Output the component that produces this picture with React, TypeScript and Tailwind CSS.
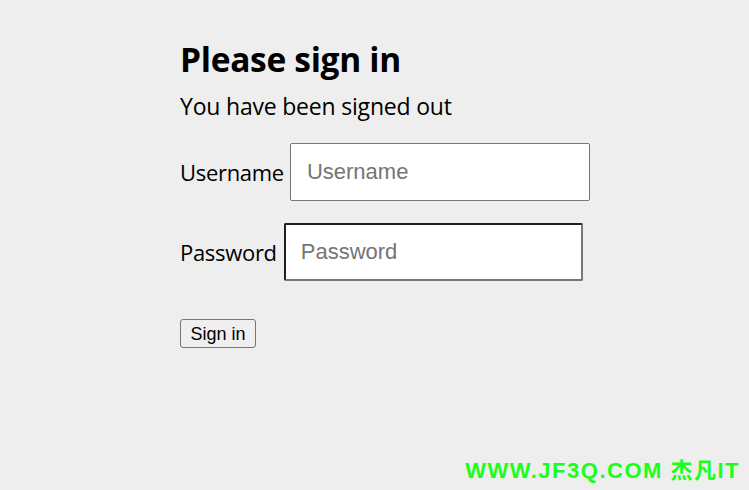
import React from "react";

const App: React.FC = () => {
  return (
    <div className="relative h-[490px] w-full overflow-hidden bg-[#eeeeee] font-['Open_Sans',sans-serif] text-black">
      <div className="pl-[180px] pt-[35px]">
        {/* Heading */}
        <h2 className="text-[33.5px] font-bold leading-[48px] tracking-[-0.3px]">Please sign in</h2>
        <p className="mt-[7px] text-[23px] leading-[32px] tracking-[-0.2px]">You have been signed out</p>

        {/* Fields */}
        <div className="mt-[21px] flex items-center">
          <label className="text-[22px] tracking-[-0.3px]">Username</label>
          <input
            type="text"
            placeholder="Username"
            className="ml-[6px] h-[58px] w-[300px] rounded-[2px] border border-[#767676] bg-white px-[16px] font-['Liberation_Sans',sans-serif] text-[22px] placeholder:text-[#757575] focus:outline-none"
          />
        </div>
        <div className="mt-[22px] flex items-center">
          <label className="text-[22px] tracking-[-0.3px]">Password</label>
          <input
            type="password"
            placeholder="Password"
            className="ml-[7px] h-[58px] w-[299px] rounded-[2px] border-2 border-[#1f1f1f] border-r-[#767676] border-b-[#767676] bg-white px-[15px] font-['Liberation_Sans',sans-serif] text-[22px] placeholder:text-[#757575] focus:outline-none"
          />
        </div>

        {/* Submit */}
        <button className="mt-[38px] h-[29px] w-[76px] rounded-[3px] border border-[#767676] bg-[#efefef] font-['Liberation_Sans',sans-serif] text-[18px] leading-none">
          Sign in
        </button>
      </div>

      {/* Watermark */}
      <div className="absolute bottom-[8px] right-[9px] font-['Liberation_Sans','Noto_Sans_CJK_SC',sans-serif] text-[22px] font-bold leading-none tracking-[1.5px] text-[#1aff1a]">
        WWW.JF3Q.COM 杰凡IT
      </div>
    </div>
  );
};

export default App;
